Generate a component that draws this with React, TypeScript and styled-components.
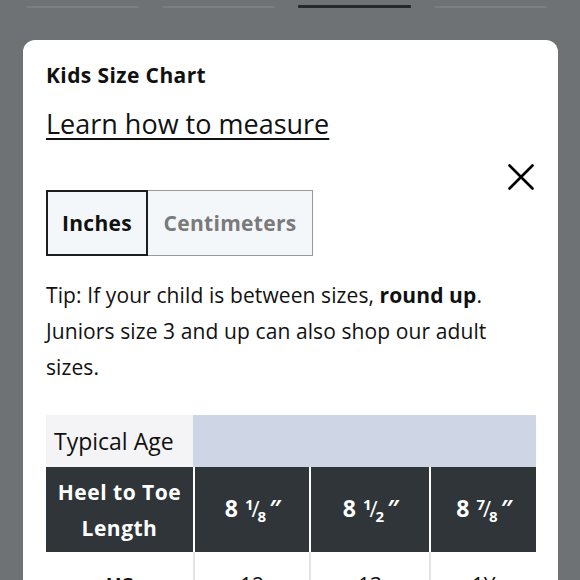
import React from "react";
import styled, { createGlobalStyle } from "styled-components";

const Global = createGlobalStyle`
  html, body { margin: 0; padding: 0; }
  body {
    background: #6e7274;
    font-family: "Open Sans", "Noto Sans", sans-serif;
    color: #111;
    overflow: hidden;
    height: 580px;
  }
`;

const Page = styled.div`
  display: flex;
  flex-direction: column;
  height: 580px;
  overflow: hidden;
`;

const TabStrip = styled.div`
  display: grid;
  grid-template-columns: repeat(4, 113px);
  column-gap: 23px;
  padding: 5px 0 0 26px;
  height: 40px;
  box-sizing: border-box;
  align-items: start;
  flex-shrink: 0;
`;

const TabLine = styled.div<{ $active?: boolean }>`
  height: ${(p) => (p.$active ? "3px" : "2px")};
  margin-top: ${(p) => (p.$active ? "0" : "1px")};
  background: ${(p) => (p.$active ? "#25292c" : "#7a7e81")};
  border-radius: 1px;
`;

const Card = styled.div`
  margin: 0 22px 0 23px;
  background: #fff;
  border-radius: 12px 12px 0 0;
  padding: 23px 23px 0 23px;
  flex: 1;
  display: flex;
  flex-direction: column;
`;

const Title = styled.h2`
  margin: 0;
  font-size: 21px;
  line-height: 24px;
  font-weight: 700;
  letter-spacing: 0.4px;
  color: #111;
`;

const LearnLink = styled.a`
  margin-top: 21px;
  font-size: 27px;
  line-height: 32px;
  font-weight: 400;
  color: #111;
  text-decoration: underline;
  text-decoration-thickness: 1.5px;
  text-underline-offset: 4px;
  align-self: flex-start;
`;

const CloseRow = styled.div`
  display: flex;
  justify-content: flex-end;
  margin-top: 24px;
  padding-right: 1px;
`;

const CloseButton = styled.button`
  width: 26px;
  height: 26px;
  padding: 0;
  border: 0;
  background: transparent;
  display: flex;
  cursor: pointer;
`;

const Toggle = styled.div`
  display: flex;
  align-self: flex-start;
`;

const ToggleButton = styled.button<{ $active?: boolean; $w: number }>`
  width: ${(p) => p.$w}px;
  height: 66px;
  box-sizing: border-box;
  background: #f4f7fa;
  border: ${(p) => (p.$active ? "2px solid #1e1e1e" : "1.5px solid #9a9a9a")};
  ${(p) => (p.$active ? "" : "border-left: 0;")}
  font-family: "Open Sans", sans-serif;
  font-weight: 700;
  font-size: 21px;
  letter-spacing: 0.3px;
  color: ${(p) => (p.$active ? "#111" : "#7a7a7a")};
  padding: 0;
`;

const Tip = styled.p`
  margin: 21px 0 0 0;
  font-size: 21px;
  line-height: 36px;
  letter-spacing: 0.1px;
  color: #111;
  max-width: 484px;
  b { font-weight: 700; }
`;

const Table = styled.div`
  margin-top: 30px;
  display: grid;
  grid-template-columns: 147px 116px 120px 107px;
  width: 490px;
`;

const AgeLabel = styled.div`
  height: 52px;
  background: #f4f4f6;
  display: flex;
  align-items: center;
  padding-left: 8px;
  font-size: 23px;
  color: #111;
`;

const AgeBand = styled.div`
  grid-column: span 3;
  background: #ced5e5;
`;

const DarkCell = styled.div<{ $first?: boolean }>`
  height: 85px;
  background: #2f3538;
  ${(p) => (p.$first ? "" : "border-left: 2px solid #fff;")}
  display: flex;
  align-items: center;
  justify-content: center;
  text-align: center;
  color: #fff;
  font-weight: 700;
  font-size: 21px;
  letter-spacing: 0.5px;
  line-height: 36px;
`;

const ValueText = styled.span`
  font-size: 23px;
  padding-left: 2px;
  white-space: nowrap;
  letter-spacing: 0;
`;

const Num = styled.span`
  font-size: 15px;
  vertical-align: 7px;
  margin-left: 7px;
  margin-right: -2px;
`;

const Den = styled.span`
  font-size: 15px;
  vertical-align: -5px;
  margin-left: -2px;
`;

const Slash = styled.span`
  font-size: 22px;
  font-weight: 400;
`;

const Inch = styled.span`
  margin-left: 3px;
  font-size: 23px;
`;

const LightCell = styled.div<{ $first?: boolean }>`
  height: 64px;
  background: #fff;
  ${(p) => (p.$first ? "" : "border-left: 2px solid #e2e2e2;")}
  display: flex;
  align-items: flex-start;
  justify-content: center;
  padding-top: 15px;
  box-sizing: border-box;
  font-size: 21px;
  line-height: 36px;
  font-weight: ${(p) => (p.$first ? 700 : 400)};
  color: #111;
`;

const Fraction = ({ whole, n, d }: { whole: string; n: string; d: string }) => (
  <ValueText>
    {whole}
    <Num>{n}</Num>
    <Slash>/</Slash>
    <Den>{d}</Den>
    <Inch>″</Inch>
  </ValueText>
);

const values = [
  { n: "1", d: "8" },
  { n: "1", d: "2" },
  { n: "7", d: "8" },
];

export default function App() {
  return (
    <>
      <Global />
      <Page>
        <TabStrip>
          <TabLine />
          <TabLine />
          <TabLine $active />
          <TabLine />
        </TabStrip>
        <Card>
          <Title>Kids Size Chart</Title>
          <LearnLink href="#">Learn how to measure</LearnLink>
          <CloseRow>
            <CloseButton aria-label="Close">
              <svg width="26" height="26" viewBox="0 0 26 26">
                <path d="M1.5 1.5 L24.5 24.5 M24.5 1.5 L1.5 24.5" stroke="#000" strokeWidth="2.6" strokeLinecap="round" fill="none" />
              </svg>
            </CloseButton>
          </CloseRow>
          <Toggle>
            <ToggleButton $active $w={102}>Inches</ToggleButton>
            <ToggleButton $w={165}>Centimeters</ToggleButton>
          </Toggle>
          <Tip>
            Tip: If your child is between sizes, <b>round up</b>. Juniors size 3 and up can also shop our adult sizes.
          </Tip>
          <Table>
            <AgeLabel>Typical Age</AgeLabel>
            <AgeBand />
            <DarkCell $first>
              Heel to Toe
              <br />
              Length
            </DarkCell>
            {values.map((v, i) => (
              <DarkCell key={i}>
                <Fraction whole="8" n={v.n} d={v.d} />
              </DarkCell>
            ))}
            <LightCell $first>US</LightCell>
            <LightCell>12</LightCell>
            <LightCell>13</LightCell>
            <LightCell>1Y</LightCell>
          </Table>
        </Card>
      </Page>
    </>
  );
}
